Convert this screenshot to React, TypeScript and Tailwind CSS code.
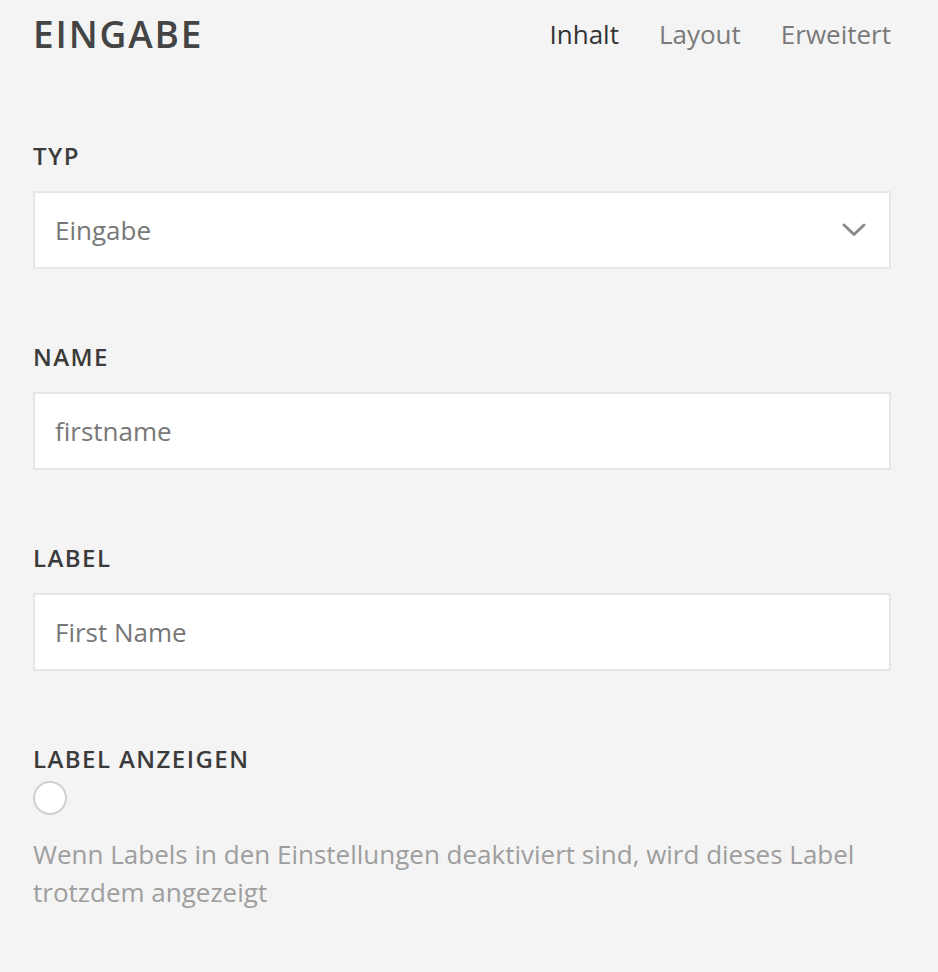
const labelCls =
  "block h-6 text-[24px] leading-6 font-semibold uppercase text-[#3b3b3b] tracking-[0.06em] font-['Open_Sans','Liberation_Sans',sans-serif]";

const boxCls =
  "h-[78px] w-full border-2 border-[#e6e6e6] bg-white pl-[20px] pr-[23px] flex items-center text-[26px] text-[#777] font-['Open_Sans',sans-serif]";

function Chevron() {
  return (
    <svg width="24" height="14" viewBox="0 0 24 14" fill="none" className="text-[#8a8a8a]">
      <polyline points="2,2 12,11.5 22,2" stroke="currentColor" strokeWidth="3" strokeLinecap="round" strokeLinejoin="round" />
    </svg>
  );
}

function Field({ label, value, select }: { label: string; value: string; select?: boolean }) {
  return (
    <div className="mt-[76px]">
      <span className={labelCls}>{label}</span>
      <div className={`${boxCls} mt-[23px] justify-between`}>
        <span>{value}</span>
        {select && <Chevron />}
      </div>
    </div>
  );
}

export default function App() {
  const tabs = [
    { name: "Inhalt", active: true },
    { name: "Layout", active: false },
    { name: "Erweitert", active: false },
  ];
  return (
    <div className="min-h-[972px] w-[938px] bg-[#f4f4f4] pl-[33px] pr-[47px] font-['Open_Sans',sans-serif]">
      <div className="flex h-[68px] items-center justify-between">
        <h1 className="text-[37px] font-semibold tracking-[0.05em] text-[#444] font-['Open_Sans',sans-serif]">
          EINGABE
        </h1>
        <nav className="flex items-center gap-[40px] text-[26px]">
          {tabs.map((t) => (
            <span key={t.name} className={t.active ? "text-[#333]" : "text-[#7a7a7a]"}>
              {t.name}
            </span>
          ))}
        </nav>
      </div>

      <Field label="Typ" value="Eingabe" select />
      <Field label="Name" value="firstname" />
      <Field label="Label" value="First Name" />

      <div className="mt-[76px]">
        <span className={labelCls}>Label anzeigen</span>
        <div className="mt-[10px] h-[34px] w-[34px] rounded-full border-2 border-[#cfcfcf] bg-white" />
        <p className="mt-[20px] text-[26px] leading-[38px] text-[#9e9e9e]">
          Wenn Labels in den Einstellungen deaktiviert sind, wird dieses Label trotzdem angezeigt
        </p>
      </div>
    </div>
  );
}
